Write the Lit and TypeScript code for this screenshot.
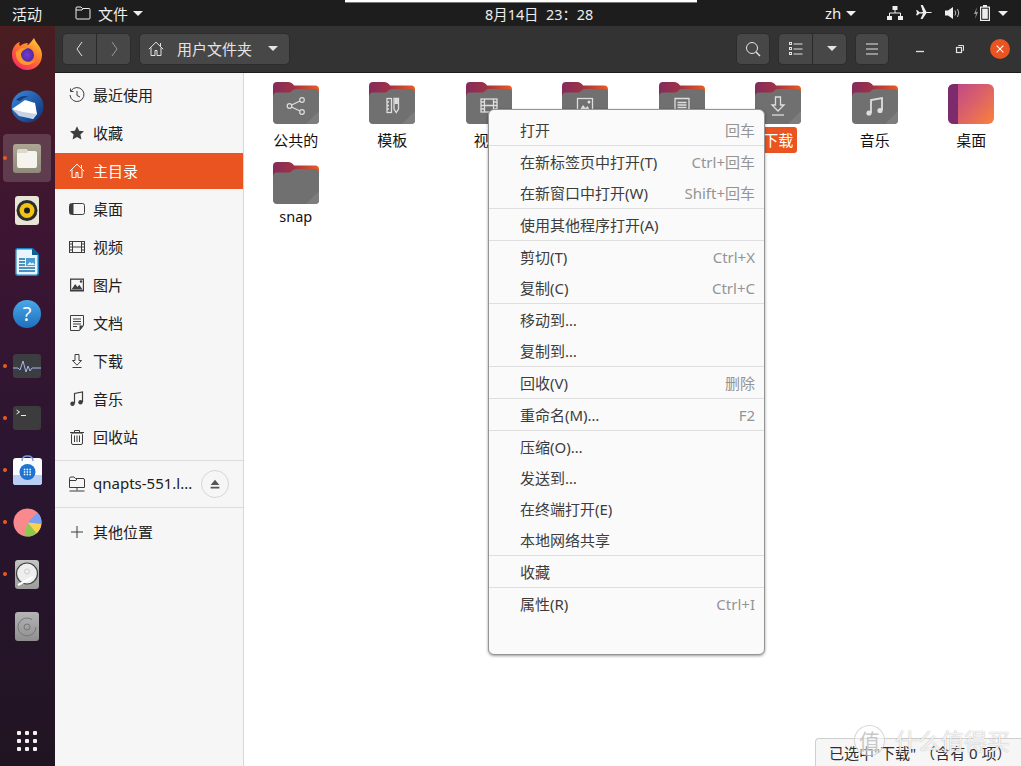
import { html, css, svg, LitElement } from 'lit';
import { customElement } from 'lit/decorators.js';
import { classMap } from 'lit/directives/class-map.js';

const stroke = (body: unknown, size = 16, box = 16) => html`<svg class="ico" width=${size} height=${size} viewBox="0 0 ${box} ${box}" fill="none" stroke="currentColor" stroke-width="1">${body}</svg>`;

const caret = html`<span class="caret"></span>`;

const ICONS = {
    recent: svg`<path d="M2.2 3.6A7 7 0 1 1 1 8"/><path d="M1.5 1.5v3h3" /><path d="M8 4v4.5l3 1.5"/>`,
    star: svg`<path fill="currentColor" stroke="none" d="M8 1.2l2.1 4.5 4.9.6-3.6 3.3 1 4.9L8 12.1l-4.4 2.4 1-4.9L1 6.3l4.9-.6z"/>`,
    home: svg`<path d="M.8 8.2L8 1.2l7.2 7"/><path d="M3 6.5v8h4v-5h2v5h4v-8"/><path d="M12.5 2v3"/>`,
    desktop: svg`<rect x=".5" y="2.5" width="15" height="11" rx="2"/><path fill="currentColor" stroke="none" d="M1 3h3.5v10H1z"/>`,
    video: svg`<rect x=".5" y="2.5" width="15" height="11"/><path d="M3.5 2.5v11M12.5 2.5v11M3.5 8h9M.5 5h3M.5 8h3M.5 11h3M12.5 5h3M12.5 8h3M12.5 11h3"/>`,
    picture: svg`<path fill="currentColor" stroke="none" d="M1 1.5h14v13H1z"/><path fill="#f6f6f6" stroke="none" d="M2.2 2.8h11.6v10H2.2z"/><path fill="currentColor" stroke="none" d="M2.5 12.5l3.7-5.6 2.2 3 1.9-2.1 3.2 4.7z"/><circle cx="12" cy="4.5" r="1.2" fill="currentColor" stroke="none"/>`,
    doc: svg`<path d="M1.5 .5h13v10l-4 5h-9z"/><path d="M4 4h8M4 6.5h8M4 9h8M4 11.5h4"/><path fill="currentColor" stroke="none" d="M10.5 15.5v-5h4z"/>`,
    download: svg`<path d="M6 1.5h4v6h2.5L8 12.2 3.5 7.5H6z"/><path d="M3.5 14.5h9"/>`,
    music: svg`<path d="M5.5 12.5V2.5l8-1.5v10" stroke-width="1.2"/><circle cx="3.5" cy="12.8" r="2.2" fill="currentColor" stroke="none"/><circle cx="11.5" cy="11.3" r="2.2" fill="currentColor" stroke="none"/>`,
    trash: svg`<path d="M1 3.5h14M5.5 3V1.5h5V3"/><rect x="2.5" y="4" width="11" height="11.5" rx="1.5"/><path d="M5.5 6.5v6.5M8 6.5v6.5M10.5 6.5v6.5"/>`,
    network: svg`<path d="M.5 11.5V2.5q0-1.500 1.500-1.500h3l1.500 1.500h7.500q1.500 0 1.500 1.500v7.500z"/><path d="M.5 4.500h6.500l1-2"/><path d="M8 11.500v3M.5 15h15"/>`,
    plus: svg`<path d="M8 2v12M2 8h12"/>`,
};

const SIDEBAR = [
    { icon: ICONS.recent, label: '最近使用' },
    { icon: ICONS.star, label: '收藏' },
    { icon: ICONS.home, label: '主目录', active: true },
    { icon: ICONS.desktop, label: '桌面' },
    { icon: ICONS.video, label: '视频' },
    { icon: ICONS.picture, label: '图片' },
    { icon: ICONS.doc, label: '文档' },
    { icon: ICONS.download, label: '下载' },
    { icon: ICONS.music, label: '音乐' },
    { icon: ICONS.trash, label: '回收站' },
];

// glyphs on the folders are centred on 23,24 of the 46x42 folder
const GLYPHS = {
    share: svg`<g fill="none" stroke="#dedede" stroke-width="1.2"><circle cx="16.500" cy="24" r="2.300"/><circle cx="29" cy="18" r="2.300"/><circle cx="29" cy="30" r="2.300"/><path d="M18.600 23l8.300-4M18.600 25l8.300 4"/></g>`,
    template: svg`<g fill="none" stroke="#dedede" stroke-width="1.300"><rect x="18" y="16.500" width="4.500" height="14"/><path d="M25 16.500h4.500v10.500l-2.250 3.500-2.250-3.500z"/><path d="M18 20h2M18 23.500h2M18 27h2"/></g><rect x="25.600" y="17" width="3.300" height="5" fill="#dedede"/>`,
    video: svg`<g fill="none" stroke="#dedede" stroke-width="1.300"><rect x="15" y="17" width="16" height="13"/><path d="M18.500 17v13M27.500 17v13M18.500 23.500h9M15 20h3.500M15 23.500h3.500M15 27h3.500M27.500 20h3.500M27.500 23.500h3.500M27.500 27h3.500"/></g>`,
    picture: svg`<rect x="15.500" y="16.500" width="15" height="14" fill="none" stroke="#dedede" stroke-width="1.300"/><path fill="#dedede" d="M17 29l4-6 2.500 3 2-2 3 5z"/><circle cx="27" cy="20" r="1.500" fill="#dedede"/>`,
    doc: svg`<path fill="none" stroke="#dedede" stroke-width="1.300" d="M16 16.500h14v10l-4 4H16zM18.500 20.500h9M18.500 23h9M18.500 25.500h9M18.500 28h5"/>`,
    download: svg`<path fill="none" stroke="#dedede" stroke-width="1.300" d="M20.500 15h5v8h3.500L23 29l-6-6h3.500z"/><path stroke="#dedede" stroke-width="1.300" d="M17 33h12"/>`,
    music: svg`<path fill="none" stroke="#dedede" stroke-width="1.800" d="M19 31V18l11-2v12"/><circle cx="17" cy="31" r="2.600" fill="#dedede"/><circle cx="28" cy="28.500" r="2.600" fill="#dedede"/>`,
};

const FILES = [
    { label: '公共的', glyph: GLYPHS.share },
    { label: '模板', glyph: GLYPHS.template },
    { label: '视频', glyph: GLYPHS.video },
    { label: '图片', glyph: GLYPHS.picture },
    { label: '文档', glyph: GLYPHS.doc },
    { label: '下载', glyph: GLYPHS.download, selected: true },
    { label: '音乐', glyph: GLYPHS.music },
    { label: '桌面', desktop: true },
    { label: 'snap', latin: true },
];

const MENU = [
    [['打开', '回车']],
    [['在新标签页中打开(T)', 'Ctrl+回车'], ['在新窗口中打开(W)', 'Shift+回车']],
    [['使用其他程序打开(A)', '']],
    [['剪切(T)', 'Ctrl+X'], ['复制(C)', 'Ctrl+C']],
    [['移动到…', ''], ['复制到…', '']],
    [['回收(V)', '删除']],
    [['重命名(M)…', 'F2']],
    [['压缩(O)…', ''], ['发送到…', ''], ['在终端打开(E)', ''], ['本地网络共享', '']],
    [['收藏', '']],
    [['属性(R)', 'Ctrl+I']],
];

const folder = (glyph: unknown, id: number) => html`
    <svg class="folder" width="46" height="42" viewBox="0 0 46 42">
        <defs>
            <linearGradient id="back${id}" x1="0" x2="1" y1="0" y2="0">
                <stop offset="0" stop-color="#842b5c"/><stop offset=".45" stop-color="#a03245"/><stop offset="1" stop-color="#ee5a22"/>
            </linearGradient>
        </defs>
        <path fill="url(#back${id})" d="M0 14V4q0-4 4-4h11q4 0 6 3.500h21q4 0 4 4V18H0z"/>
        <path fill="#707070" d="M0 15q0-4.500 4-4.500h12q2 0 3.500-2 1-1.500 3-1.500H42q4 0 4 4v27q0 4-4 4H4q-4 0-4-4z"/>
        <path fill="#7d7d7d" d="M46 29v9q0 4-4 4H33z"/>
        ${glyph}
    </svg>`;

const desktopIcon = html`
    <svg class="folder" width="46" height="42" viewBox="0 0 46 42">
        <defs>
            <linearGradient id="desk" x1="0" x2="1" y1="0" y2=".8">
                <stop offset="0" stop-color="#b8438f"/><stop offset=".55" stop-color="#d9606a"/><stop offset="1" stop-color="#f57c42"/>
            </linearGradient>
        </defs>
        <rect y="2" width="46" height="40" rx="6" fill="url(#desk)"/>
        <path fill="#7c2c6c" d="M6 2h4v40H6q-6 0-6-6V8q0-6 6-6z"/>
    </svg>`;

const DOCK = [
    {
        icon: html`<svg width="32" height="32" viewBox="0 0 32 32">
            <defs>
                <linearGradient id="ff" x1=".9" y1="0" x2=".2" y2="1"><stop offset="0" stop-color="#ffd23a"/><stop offset=".45" stop-color="#ff7a2c"/><stop offset="1" stop-color="#f8256b"/></linearGradient>
                <radialGradient id="ffg"><stop offset="0" stop-color="#7a3ad0"/><stop offset="1" stop-color="#4b2aa5"/></radialGradient>
            </defs>
            <path fill="url(#ff)" d="M1 17C1 9 5 5 9 4c-1 2-1 3 0 4 2-2 5-3 8-3-1 1-1 2 0 2 2-2 4-4 6-7 1 3 3 5 5 8 2 3 3 6 3 9 0 9-7 15-15 15S1 25 1 17z"/>
            <circle cx="16" cy="17" r="7" fill="url(#ffg)"/>
            <path fill="#ff9a2a" d="M5 14c3-4 8-5 12-3-4 0-6 2-7 5 0 5 4 8 8 8 3 0 5-1 7-3-2 4-6 6-10 6C9 27 4 21 5 14z"/>
        </svg>`,
    },
    {
        icon: html`<svg width="33" height="33" viewBox="0 0 33 33">
            <defs><linearGradient id="tb" x1="0" y1="0" x2="1" y2="1"><stop offset="0" stop-color="#3a8be0"/><stop offset="1" stop-color="#0c2f72"/></linearGradient></defs>
            <circle cx="16.500" cy="16.500" r="16" fill="url(#tb)"/>
            <path fill="#fff" d="M1 19l13-9 10 3 2 11-4 5z"/>
            <path fill="#c8d2e4" d="M1 19l11 3 14 2-4 5-14-3z"/>
            <path fill="#163d84" d="M5 10c4-4 9-5 13-3-4 0-7 2-9 4z"/>
        </svg>`,
    },
    {
        active: true,
        dot: true,
        icon: html`<svg width="28" height="29" viewBox="0 0 28 29">
            <defs><linearGradient id="fl" x1="0" x2="0" y1="0" y2="1"><stop offset="0" stop-color="#aca694"/><stop offset="1" stop-color="#8f8a79"/></linearGradient></defs>
            <rect width="28" height="29" rx="3" fill="url(#fl)"/>
            <path fill="#f5f3ed" d="M4 8q0-3 3-3h5q2 0 3 2h7q2 0 2 2v13q0 2-2 2H6q-2 0-2-2z"/>
            <path fill="#dcd8cc" d="M4 8q0-3 3-3h5q2 0 3 2l-1 2H4z"/>
        </svg>`,
    },
    {
        icon: html`<svg width="24" height="29" viewBox="0 0 24 29">
            <rect width="24" height="29" rx="3" fill="#e8e4d6"/>
            <circle cx="12" cy="14.500" r="10.500" fill="#2c2c2c"/>
            <circle cx="12" cy="14.500" r="7.500" fill="#f2c313"/>
            <circle cx="12" cy="14.500" r="3" fill="#1d1d1d"/>
        </svg>`,
    },
    {
        icon: html`<svg width="24" height="28" viewBox="0 0 24 28">
            <path fill="#eaf5fb" stroke="#1b83c4" stroke-width="1.500" d="M2.500 .8h15l5.700 5.700V25q0 2.200-2.200 2.200H3Q.8 27.200.8 25V3Q.8.800 2.500.8z"/>
            <path fill="#0f5f94" d="M17 0l7 7h-7z"/>
            <path stroke="#1b6ea8" stroke-width="1.300" d="M4 11h6M4 14h6M4 17h6M4 20h16M4 23h16"/>
            <rect x="11" y="10" width="9" height="8" fill="#4a9bd0"/>
            <path fill="#dff0fa" d="M12 17l3-3 1.500 1.500 1.500-1 2 2.500z"/>
        </svg>`,
    },
    {
        icon: html`<svg width="28" height="28" viewBox="0 0 28 28">
            <defs><linearGradient id="hp" x1="0" x2="0" y1="0" y2="1"><stop offset="0" stop-color="#49a8e8"/><stop offset="1" stop-color="#1e6fbb"/></linearGradient></defs>
            <circle cx="14" cy="14" r="14" fill="url(#hp)"/>
            <text x="14" y="21" text-anchor="middle" fill="#fff" font-size="20" font-family="Noto Sans">?</text>
        </svg>`,
    },
    {
        dot: true,
        icon: html`<svg width="28" height="24" viewBox="0 0 28 24">
            <rect width="28" height="24" rx="3" fill="#3b3d40"/>
            <path fill="none" stroke="#a9b4ec" stroke-width="1" d="M0 14h5l2 2 3-9 3 11 2-6 2 5 2-3h9"/>
        </svg>`,
    },
    {
        dot: true,
        icon: html`<svg width="28" height="24" viewBox="0 0 28 24">
            <rect width="28" height="24" rx="3" fill="#3c3c3c"/>
            <path fill="none" stroke="#eee" d="M3.500 4l3 2-3 2M8 9.500h5"/>
        </svg>`,
    },
    {
        dot: true,
        icon: html`<svg width="29" height="30" viewBox="0 0 29 30">
            <rect y="3" width="29" height="27" rx="3" fill="#fbfbfb"/>
            <path fill="#b9cef5" d="M0 20h29v7q0 3-3 3H3q-3 0-3-3z"/>
            <path fill="none" stroke="#7d9ae0" stroke-width="1.400" d="M9 6q0-5 5.500-5T20 6"/>
            <circle cx="14.500" cy="17" r="8" fill="#1e74d0"/>
            <path stroke="#fff" stroke-width="1.500" stroke-dasharray="1.500 1.300" d="M10.800 14.500h8M10.800 17h8M10.800 19.500h8"/>
        </svg>`,
    },
    {
        dot: true,
        icon: html`<svg width="29" height="29" viewBox="0 0 29 29">
            <circle cx="14.500" cy="14.500" r="14" fill="#f88a8e"/>
            <path fill="#7c9ff2" d="M14.500 14.500L24.500 4.700a14 14 0 0 1 4 10.500v1z"/>
            <path fill="#f9d24f" d="M14.500 14.500L28.300 16a14 14 0 0 1-5 9.500z"/>
            <path fill="#8ec850" d="M14.500 14.500L23.500 25.200A14 14 0 0 1 11 28.100z"/>
        </svg>`,
    },
    {
        dot: true,
        icon: html`<svg width="24" height="29" viewBox="0 0 24 29">
            <defs><linearGradient id="hd" x1="0" x2="0" y1="0" y2="1"><stop offset="0" stop-color="#c4c4c4"/><stop offset="1" stop-color="#9c9c9c"/></linearGradient></defs>
            <rect width="24" height="29" rx="3" fill="url(#hd)"/>
            <circle cx="12" cy="13.500" r="10.500" fill="#eee" stroke="#444" stroke-width="1.200"/>
            <circle cx="12" cy="11.500" r="2.500" fill="none" stroke="#ccc"/>
            <path stroke="#fff" stroke-width="2" d="M3 25l15-8"/>
        </svg>`,
    },
    {
        icon: html`<svg width="24" height="29" viewBox="0 0 24 29">
            <defs><linearGradient id="dv" x1="0" x2="0" y1="0" y2="1"><stop offset="0" stop-color="#b5b5b5"/><stop offset="1" stop-color="#8e8e8e"/></linearGradient></defs>
            <rect width="24" height="29" rx="3" fill="url(#dv)"/>
            <circle cx="12" cy="15" r="3" fill="none" stroke="#777"/>
            <path fill="none" stroke="#777" d="M17 7.500A9 9 0 1 0 21 15"/>
        </svg>`,
    },
];

@customElement('app-root')
export class AppRoot extends LitElement {
    static styles = css`
        :host {
            display: block;
            position: relative;
            width: 1021px;
            height: 766px;
            overflow: hidden;
            font-family: "Noto Sans", "Noto Sans CJK SC", sans-serif;
            font-size: 15px;
            color: #222;
        }

        svg {
            display: block;
            flex: none;
        }

        /* top panel */
        .panel {
            height: 26px;
            background: #1d1d1d;
            color: #eee;
            display: flex;
            align-items: center;
            padding-left: 12px;
        }

        .app-menu {
            display: flex;
            align-items: center;
            margin-left: 33px;
        }

        .app-menu span:first-of-type {
            margin-left: 7px;
        }

        .clock {
            margin-left: 342px;
            font-size: 14.4px;
            width: 120px;
            white-space: pre;
        }

        .lang {
            display: flex;
            align-items: center;
            margin-left: 220px;
            gap: 5px;
        }

        .tray {
            display: flex;
            align-items: center;
            margin-left: 31px;
            gap: 13px;
        }

        .battery {
            display: flex;
            align-items: center;
            gap: 2px;
        }

        .caret {
            width: 0;
            height: 0;
            border: 5px solid transparent;
            border-top: 5px solid currentColor;
            border-bottom: 0;
            margin-left: 5px;
            flex: none;
        }

        .lang .caret {
            margin-left: 0;
        }

        .tray .caret {
            margin-left: -5px;
        }

        .strip {
            position: absolute;
            left: 345px;
            top: 0;
            width: 352px;
            height: 2px;
            background: #fff;
            border-bottom: 1px solid #777;
        }

        .desk {
            display: flex;
            height: 740px;
        }

        /* dock */
        .dock {
            width: 55px;
            flex: none;
            display: flex;
            flex-direction: column;
            padding: 2px 1px 0 0;
            box-sizing: border-box;
            background: linear-gradient(180deg, #4a1d20 0%, #3d1533 28%, #2a1530 60%, #211422 100%);
        }

        .dock-item {
            position: relative;
            height: 52px;
            display: flex;
            align-items: center;
            justify-content: center;
            flex: none;
        }

        .dock-item.active::before {
            content: "";
            position: absolute;
            left: 3px;
            right: 3px;
            top: 2px;
            bottom: 2px;
            border-radius: 4px;
            background: rgba(255, 255, 255, 0.16);
        }

        .dock-item svg {
            position: relative;
        }

        .dot {
            position: absolute;
            left: 3px;
            top: 24px;
            width: 4px;
            height: 4px;
            border-radius: 50%;
            background: #ef5a1c;
        }

        .apps {
            margin-top: auto;
            margin-bottom: 15px;
            align-self: center;
            display: grid;
            grid-template-columns: repeat(3, 4px);
            gap: 4px;
        }

        .apps i {
            width: 4px;
            height: 4px;
            background: #f2f2f2;
            border-radius: 1px;
        }

        /* window */
        .window {
            flex: 1;
            display: flex;
            flex-direction: column;
            min-width: 0;
        }

        .toolbar {
            height: 47px;
            box-sizing: border-box;
            background: #333;
            border-bottom: 1px solid #1c1c1c;
            display: flex;
            align-items: center;
            padding: 0 11px 1px 7px;
            color: #e4e4e4;
        }

        .btn-group {
            display: flex;
            height: 32px;
            border-radius: 5px;
            border: 1px solid #2c2c2c;
            background: #474747;
            box-sizing: border-box;
            overflow: hidden;
        }

        .btn {
            display: flex;
            align-items: center;
            justify-content: center;
            width: 33px;
            color: #e4e4e4;
        }

        .btn.solo {
            width: 32px;
        }

        .btn + .btn {
            border-left: 1px solid #2a2a2a;
        }

        .btn.dim {
            color: #9a9a9a;
        }

        .path {
            margin-left: 8px;
            width: 151px;
            padding: 0 11px 0 8px;
            align-items: center;
            color: #e4e4e4;
        }

        .path b {
            font-weight: 400;
            margin-left: 13px;
            flex: 1;
        }

        .end {
            margin-left: auto;
            display: flex;
            align-items: center;
            gap: 8px;
        }

        .win-btns {
            display: flex;
            align-items: center;
            margin-left: 16px;
            gap: 26px;
        }

        .close {
            width: 20px;
            height: 20px;
            margin-left: -3px;
            border-radius: 50%;
            background: #e95420;
            display: flex;
            align-items: center;
            justify-content: center;
        }

        .body {
            flex: 1;
            display: flex;
            min-height: 0;
        }

        /* places */
        .sidebar {
            width: 189px;
            flex: none;
            box-sizing: border-box;
            background: #f6f6f6;
            border-right: 1px solid #d8d8d8;
            padding-top: 4px;
        }

        .row {
            height: 36px;
            margin-bottom: 2px;
            display: flex;
            align-items: center;
            padding: 0 14px;
            gap: 8px;
            color: #202020;
        }

        .row span {
            margin-top: -2px;
        }

        .row .ico {
            color: #3d3d3d;
        }

        .row.active {
            background: #e95420;
            color: #fff;
        }

        .row.active .ico {
            color: #fff;
        }

        .rule {
            height: 1px;
            background: #dcdcdc;
        }

        .rule.first {
            margin: 5px 0;
        }

        .rule.second {
            margin-bottom: 6px;
        }

        .row.mount {
            margin-bottom: 5px;
        }

        .eject {
            width: 28px;
            height: 28px;
            margin-left: auto;
            border: 1px solid #d6d6d6;
            border-radius: 50%;
            box-sizing: border-box;
            display: flex;
            align-items: center;
            justify-content: center;
        }

        /* files */
        .files {
            flex: 1;
            background: #fff;
            display: grid;
            grid-template-columns: repeat(8, 96.5px);
            grid-auto-rows: 71px;
            row-gap: 9px;
            padding: 9px 0 0 3.5px;
            align-content: start;
        }

        .file {
            display: flex;
            flex-direction: column;
            align-items: center;
        }

        .file span {
            margin-top: 3px;
            height: 26px;
            line-height: 26px;
            padding: 0 4px;
            border-radius: 3px;
            color: #111;
        }

        .file span.selected {
            background: #e95420;
            color: #fff;
        }

        .file span.latin {
            margin-top: 2px;
            height: 20px;
            line-height: 20px;
            font-size: 14.5px;
        }

        /* context menu */
        .menu {
            position: absolute;
            left: 488px;
            top: 109px;
            width: 277px;
            height: 546px;
            box-sizing: border-box;
            padding-top: 4px;
            background: #fafafa;
            border: 1px solid #949494;
            border-radius: 6px;
            box-shadow: 0 1px 3px rgba(0, 0, 0, 0.4);
            color: #3d3d3d;
        }

        .menu-section + .menu-section {
            border-top: 1px solid #dfdfdf;
        }

        .menu-item {
            height: 31px;
            display: flex;
            align-items: center;
            justify-content: space-between;
            padding: 0 9px 0 31px;
            box-sizing: border-box;
        }

        .menu-item em {
            font-style: normal;
            color: #949494;
        }

        /* floating status */
        .status {
            position: absolute;
            right: 0;
            bottom: 0;
            width: 206px;
            height: 28px;
            box-sizing: border-box;
            padding: 3px 0 0 13px;
            background: #f6f6f6;
            border: 1px solid #cfcfcf;
            border-width: 1px 0 0 1px;
            border-top-left-radius: 4px;
            color: #2e2e2e;
            white-space: pre;
        }

        /* site watermark burnt into the screenshot */
        .mark {
            position: absolute;
            left: 854px;
            top: 723px;
            display: flex;
            align-items: center;
            gap: 10px;
            color: rgba(255, 255, 255, 0.85);
            text-shadow: 0 0 1px rgba(120, 120, 120, 0.7);
            font-size: 23px;
            white-space: nowrap;
        }

        .mark i {
            width: 31px;
            height: 31px;
            border-radius: 50%;
            border: 1px solid rgba(200, 200, 200, 0.7);
            background: rgba(255, 255, 255, 0.45);
            box-sizing: border-box;
            display: flex;
            align-items: center;
            justify-content: center;
            font-style: normal;
            font-size: 21px;
            color: #c8c8c8;
            text-shadow: none;
        }
    `;

    render() {
        return html`
            <div class="panel">
                <span>活动</span>
                <div class="app-menu">
                    ${stroke(svg`<path stroke="#eee" d="M1 13V3q0-1 1-1h4l1.500 1.500H14q1 0 1 1V13q0 1-1 1H2q-1 0-1-1zM1 5h6l1-1.500"/>`)}
                    <span>文件</span>${caret}
                </div>
                <span class="clock">8月14日  23：28</span>
                <div class="lang"><span>zh</span>${caret}</div>
                <div class="tray">
                    ${stroke(svg`<g fill="#eee" stroke="none"><rect x="5.500" y="1" width="5" height="4"/><rect x="0" y="11" width="5" height="4"/><rect x="11" y="11" width="5" height="4"/></g><path stroke="#eee" d="M8 5v3M2.500 11V8h11v3"/>`)}
                    ${stroke(svg`<path fill="#eee" stroke="none" d="M0 6.800h1.500l2 2L7 8.500 4.500 1H6.500l4 7.500h3.500q2 0 2 .500t-2 .500h-3.500l-4 6H4.500L7 10l-3.500 0-2 1.800H0l1-2.800z" transform="translate(0 -1.500)"/>`)}
                    ${stroke(svg`<path fill="#eee" stroke="none" d="M0 5.500h3L8 2v12l-5-3.500H0z"/><path stroke="#bbb" d="M10 5.500q1.500 2.500 0 5M12.500 4q2.500 4 0 8"/>`)}
                    <span class="battery">
                        <svg width="4" height="12" viewBox="0 0 4 12"><path fill="#999" d="M3 0L0 7h2l-1 5 3-7H2z"/></svg>
                        <svg width="10" height="16" viewBox="0 0 10 16"><path fill="#eee" d="M3 0h4v1.500h3V16H0V1.500h3z"/><rect x="1.200" y="2.700" width="7.600" height="12.100" fill="#1d1d1d"/><rect x="2.200" y="3.700" width="5.600" height="10.100" fill="#eee"/></svg>
                    </span>
                    ${caret}
                </div>
            </div>
            <div class="strip"></div>
            <div class="desk">
                <nav class="dock">
                    ${DOCK.map((d) => html`
                        <div class="dock-item ${classMap({ active: !!d.active })}">
                            ${d.dot ? html`<span class="dot"></span>` : ''}
                            ${d.icon}
                        </div>
                    `)}
                    <div class="apps">${Array.from({ length: 9 }, () => html`<i></i>`)}</div>
                </nav>
                <div class="window">
                    <header class="toolbar">
                        <div class="btn-group">
                            <div class="btn">${stroke(svg`<path d="M10 1L5 8l5 7"/>`)}</div>
                            <div class="btn dim">${stroke(svg`<path d="M6 1l5 7-5 7"/>`)}</div>
                        </div>
                        <div class="btn-group path">
                            ${stroke(ICONS.home)}
                            <b>用户文件夹</b>${caret}
                        </div>
                        <div class="end">
                            <div class="btn-group"><div class="btn solo">${stroke(svg`<circle cx="7" cy="7" r="5.500"/><path d="M11 11l4 4" stroke-width="1.500"/>`)}</div></div>
                            <div class="btn-group">
                                <div class="btn">${stroke(svg`<path d="M5.500 3h9M5.500 8h9M5.500 13h9"/><rect x="1.500" y="1.500" width="2" height="2"/><rect x="1.500" y="6.500" width="2" height="2"/><rect x="1.500" y="11.500" width="2" height="2"/>`)}</div>
                                <div class="btn">${caret}</div>
                            </div>
                            <div class="btn-group"><div class="btn solo">${stroke(svg`<path d="M2 3h12M2 8h12M2 13h12"/>`)}</div></div>
                            <div class="win-btns">
                                ${stroke(svg`<path d="M3 9.500h8" stroke-width="1.300"/>`, 14, 14)}
                                ${stroke(svg`<rect x="3.500" y="5.500" width="5" height="5" stroke-width="1.200"/><path d="M5.500 4V3.500h5v5H9.500"/>`, 14, 14)}
                                <div class="close">${stroke(svg`<path stroke="#fff" stroke-width="1.500" d="M3.500 3.500l9 9M12.500 3.500l-9 9"/>`, 12, 16)}</div>
                            </div>
                        </div>
                    </header>
                    <div class="body">
                        <aside class="sidebar">
                            ${SIDEBAR.map((s) => html`
                                <div class="row ${classMap({ active: !!s.active })}">${stroke(s.icon)}<span>${s.label}</span></div>
                            `)}
                            <div class="rule first"></div>
                            <div class="row mount">
                                ${stroke(ICONS.network)}<span>qnapts-551.l...</span>
                                <div class="eject">${stroke(svg`<path fill="#555" stroke="none" d="M8 3l5 6H3zM3 11h10v2H3z"/>`, 14, 16)}</div>
                            </div>
                            <div class="rule second"></div>
                            <div class="row">${stroke(ICONS.plus)}<span>其他位置</span></div>
                        </aside>
                        <main class="files">
                            ${FILES.map((f, i) => html`
                                <div class="file">
                                    ${f.desktop ? desktopIcon : folder(f.glyph ?? '', i)}
                                    <span class=${classMap({ selected: !!f.selected, latin: !!f.latin })}>${f.label}</span>
                                </div>
                            `)}
                        </main>
                    </div>
                </div>
            </div>
            <div class="menu">
                ${MENU.map((section) => html`
                    <div class="menu-section">
                        ${section.map(([label, accel]) => html`<div class="menu-item"><span>${label}</span><em>${accel}</em></div>`)}
                    </div>
                `)}
            </div>
            <div class="status">已选中"下载" （含有 0 项）</div>
            <div class="mark"><i>值</i><span>什么值得买</span></div>
        `;
    }
}

declare global {
    interface HTMLElementTagNameMap {
        'app-root': AppRoot;
    }
}
